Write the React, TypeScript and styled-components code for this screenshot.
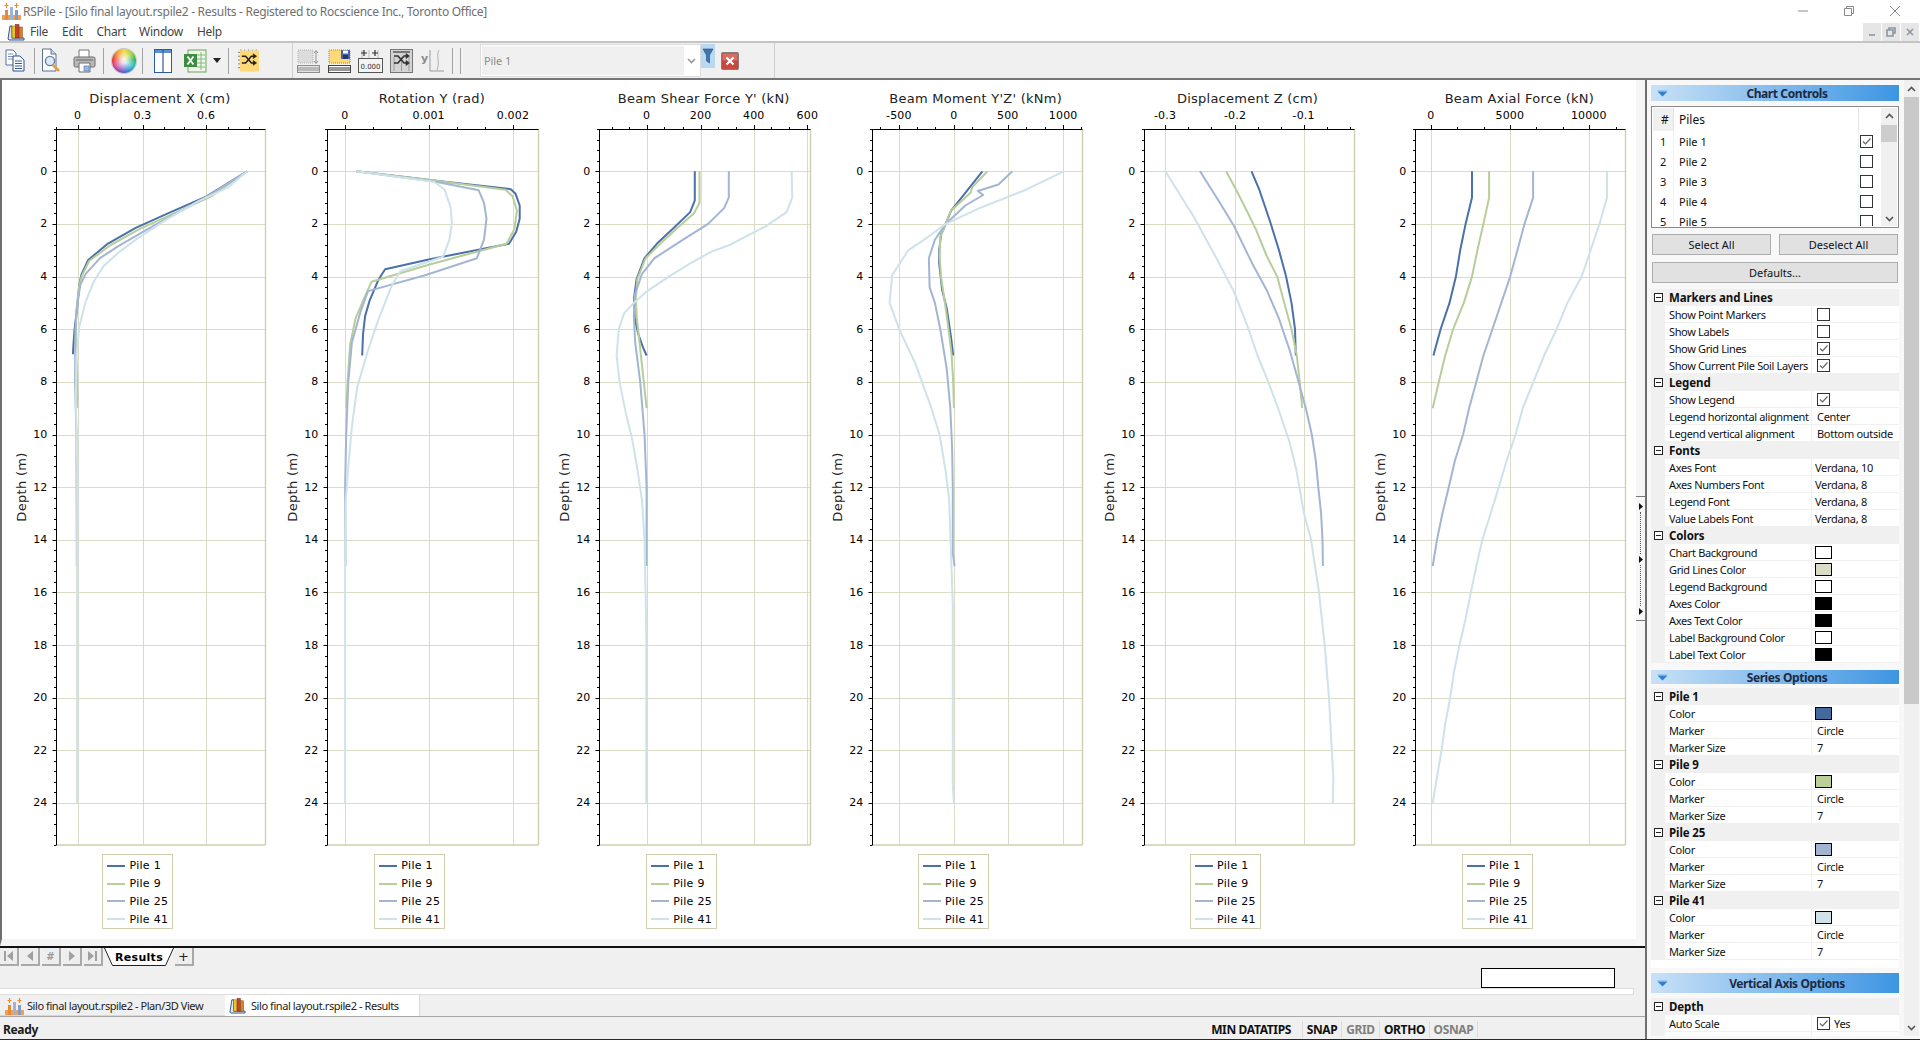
import React from 'react';
import styled, { createGlobalStyle } from 'styled-components';

const UI_FONT = '"Noto Sans", "Liberation Sans", sans-serif';
const CHART_FONT = '"DejaVu Sans", Verdana, sans-serif';

const GlobalStyle = createGlobalStyle`
	html, body {
		margin: 0;
		padding: 0;
		background: #fff;
		overflow: hidden;
	}
	* {
		box-sizing: border-box;
	}
`;

const Window = styled.div`
	width: 1920px;
	height: 1040px;
	display: flex;
	flex-direction: column;
	font-family: ${UI_FONT};
	font-size: 11px;
	color: #111;
	background: #fff;
	overflow: hidden;
	border-bottom: 1px solid #1c2a4a;
`;

/* ---------- title + menu ---------- */

const TitleBar = styled.div`
	height: 22px;
	flex: none;
	display: flex;
	align-items: center;
	padding-left: 2px;
	font-size: 12px;
	color: #6f6f6f;
`;

const TitleText = styled.span`
	margin-left: 2px;
	letter-spacing: -0.28px;
`;

const CaptionButtons = styled.div`
	margin-left: auto;
	display: flex;
	align-items: center;
	padding-right: 20px;
	gap: 36px;
`;

const MenuBar = styled.div`
	height: 19px;
	flex: none;
	display: flex;
	align-items: center;
	padding-left: 7px;
	color: #444;
`;

const MenuItem = styled.span<{ $ml: number }>`
	margin-left: ${(p) => p.$ml}px;
	font-size: 12px;
	letter-spacing: -0.28px;
`;

const MdiButtons = styled.div`
	margin-left: auto;
	display: flex;
	gap: 1px;
	padding-right: 1px;
`;

const MdiButton = styled.div`
	width: 18px;
	height: 18px;
	background: #e6e6e6;
	display: flex;
	align-items: center;
	justify-content: center;
`;

/* ---------- toolbar ---------- */

const Toolbar = styled.div`
	height: 39px;
	flex: none;
	display: flex;
	align-items: center;
	background: #f0f0f0;
	border-top: 2px solid #c4c4c4;
	border-bottom: 2px solid #767676;
`;

const IconSlot = styled.div<{ $ml: number; $w: number }>`
	flex: none;
	margin-left: ${(p) => p.$ml}px;
	width: ${(p) => p.$w}px;
	height: 25px;
	display: flex;
	align-items: center;
	justify-content: center;
`;

const ToolSep = styled.div<{ $ml: number; $tall?: boolean }>`
	flex: none;
	margin-left: ${(p) => p.$ml}px;
	width: 1px;
	height: ${(p) => (p.$tall ? 35 : 26)}px;
	background: ${(p) => (p.$tall ? '#cfcfcf' : '#a2a2a2')};
`;

const Wheel = styled.div`
	width: 24px;
	height: 24px;
	border-radius: 50%;
	background: radial-gradient(circle, rgba(255, 255, 255, 0.85) 0 12%, rgba(255, 255, 255, 0) 70%),
		conic-gradient(#f7d327, #a6d02c, #27b14c, #1cb7c6, #2f6fd0, #7a3fb8, #d82f8c, #e5332a, #f48a22, #f7d327);
	box-shadow: 0 0 0 1px rgba(120, 120, 120, 0.35);
`;

const Combo = styled.div`
	flex: none;
	margin-left: 19px;
	width: 221px;
	height: 33px;
	background: #fff;
	border: 1px solid #dcdcdc;
	padding: 1px;
	display: flex;
	align-items: center;
	color: #8d8d8d;
	font-size: 11px;
	letter-spacing: -0.1px;
`;

const ComboField = styled.div`
	width: 202px;
	height: 29px;
	background: #f0f0f0;
	padding-left: 2px;
	display: flex;
	align-items: center;
`;

const ComboChevron = styled.div`
	flex: 1;
	display: flex;
	justify-content: center;
`;

const FilterBtn = styled.div`
	flex: none;
	align-self: flex-start;
	margin-top: 1px;
	width: 14px;
	height: 24px;
	background: #b9d9f3;
	display: flex;
	align-items: center;
	justify-content: center;
`;

/* ---------- main area ---------- */

const Main = styled.div`
	flex: 1;
	min-height: 0;
	display: flex;
`;

const LeftColumn = styled.div`
	width: 1645px;
	flex: none;
	display: flex;
	flex-direction: column;
	background: #f0f0f0;
`;

const ChartFrame = styled.div`
	height: 866px;
	flex: none;
	display: flex;
	background: #f0f0f0;
`;

const ChartArea = styled.div`
	width: 1636px;
	flex: none;
	background: #fff;
	display: flex;
	border-left: 2px solid #6f6f6f;
	border-bottom: 7px solid #f4f4f4;
`;

const Splitter = styled.div`
	flex: 1;
	background: #f6f6f6;
	display: flex;
	flex-direction: column;
	align-items: stretch;
	padding-top: 416px;
`;

const SplitterGrip = styled.div`
	height: 125px;
	border-top: 1px solid #777;
	border-bottom: 1px solid #777;
	display: flex;
	flex-direction: column;
	justify-content: space-between;
	align-items: center;
	padding: 6px 0 5px;
`;

const SplitterDots = styled.div`
	flex: 1;
	width: 1px;
	margin: 2px 0;
	border-left: 1px dotted #555;
`;

const ChartCell = styled.div`
	width: 271.9px;
	flex: none;
	display: flex;
	flex-direction: column;
	align-items: center;
`;

const ChartTitle = styled.div`
	margin-top: 11px;
	height: 16px;
	line-height: 16px;
	font-family: ${CHART_FONT};
	font-size: 13px;
	letter-spacing: 0.25px;
	color: #222;
	white-space: nowrap;
	text-align: center;
	width: 100%;
	padding-left: 44px;
`;

const ChartSvg = styled.svg`
	display: block;
	flex: none;
	align-self: flex-start;
`;

const AxisNumber = styled.text`
	font-family: ${CHART_FONT};
	font-size: 11px;
	letter-spacing: 0.15px;
	fill: #000;
`;

const AxisLabel = styled.text`
	font-family: ${CHART_FONT};
	font-size: 13px;
	letter-spacing: 0.3px;
	fill: #222;
`;

const Legend = styled.div`
	margin-top: 7px;
	width: 71px;
	height: 75px;
	border: 1.5px solid #cfcfae;
	padding: 2px 0 0 4px;
	display: flex;
	flex-direction: column;
	font-family: ${CHART_FONT};
	font-size: 11px;
	letter-spacing: 0.3px;
	color: #000;
`;

const LegendRow = styled.div`
	height: 18px;
	display: flex;
	align-items: center;
	white-space: nowrap;
`;

const LegendLine = styled.div<{ $color: string }>`
	width: 18px;
	height: 2px;
	margin-right: 4px;
	background: ${(p) => p.$color};
`;

/* ---------- sheet tabs + bottom ---------- */

const SheetBar = styled.div`
	height: 42px;
	flex: none;
	border-top: 2px solid #111;
	display: flex;
	align-items: flex-start;
	position: relative;
`;

const SheetNav = styled.div`
	width: 19px;
	height: 18px;
	margin-right: 2px;
	background: #eeeeee;
	border-right: 2px solid #a9a9a9;
	border-bottom: 2px solid #a9a9a9;
	display: flex;
	align-items: center;
	justify-content: center;
	color: #9a9a9a;
	font-family: ${CHART_FONT};
	font-weight: 700;
	font-size: 10px;
`;

const SheetTab = styled.div`
	position: relative;
	width: 70px;
	height: 18px;
	margin-left: -1px;
	font-family: ${CHART_FONT};
	font-weight: 700;
	font-size: 11px;
	letter-spacing: 0.3px;
	display: flex;
	align-items: center;
	justify-content: center;
	color: #000;
`;

const SheetTabShape = styled.svg`
	position: absolute;
	left: 0;
	top: 0;
`;

const SheetTabLabel = styled.span`
	position: relative;
`;

const SheetAdd = styled(SheetNav)`
	margin-left: 1px;
	color: #222;
	font-size: 13px;
	font-weight: 400;
`;

const SearchBox = styled.div`
	position: absolute;
	left: 1481px;
	top: 20px;
	width: 134px;
	height: 20px;
	background: #fff;
	border: 1px solid #000;
`;

const ScrollStrip = styled.div`
	height: 7px;
	flex: none;
	width: 1634px;
	background: #fff;
	border: 1px solid #dedede;
	border-left: 0;
`;

const DocTabs = styled.div`
	height: 22px;
	flex: none;
	display: flex;
	align-items: flex-end;
	border-bottom: 1px solid #a8a8a8;
`;

const DocTab = styled.div<{ $active?: boolean; $w: number }>`
	width: ${(p) => p.$w}px;
	height: ${(p) => (p.$active ? 21 : 20)}px;
	background: ${(p) => (p.$active ? '#fff' : '#f0f0f0')};
	border-right: ${(p) => (p.$active ? '1px solid #d8d8d8' : '0')};
	border-bottom: ${(p) => (p.$active ? '0' : '1px solid #d8d8d8')};
	display: flex;
	align-items: center;
	gap: ${(p) => (p.$active ? 5 : 3)}px;
	padding-left: ${(p) => (p.$active ? 4 : 5)}px;
	font-size: 11px;
	letter-spacing: -0.43px;
	white-space: nowrap;
	color: #222;
`;

const StatusBar = styled.div`
	flex: 1;
	display: flex;
	align-items: center;
	padding: 2px 0 0 3px;
	font-weight: 700;
	font-size: 12px;
	letter-spacing: -0.35px;
	color: #1a1a1a;
`;

const StatusPanes = styled.div`
	margin-left: auto;
	display: flex;
	align-items: center;
	padding-right: 167px;
`;

const StatusPane = styled.div<{ $w: number; $off?: boolean; $pr?: number }>`
	width: ${(p) => p.$w}px;
	height: 17px;
	line-height: 17px;
	text-align: ${(p) => (p.$pr ? 'right' : 'center')};
	padding-right: ${(p) => p.$pr ?? 0}px;
	border-right: 1px solid #dcdcdc;
	color: ${(p) => (p.$off ? '#808080' : '#111')};
	white-space: nowrap;
`;

/* ---------- right panel ---------- */

const RightPanel = styled.div`
	flex: 1;
	display: flex;
	background: #f8f8f8;
	border-left: 2px solid #6f6f6f;
	min-width: 0;
`;

const PanelBody = styled.div`
	width: 257px;
	flex: none;
	padding: 5px 5px 0 4px;
	overflow: hidden;
	height: 956px;
`;

const SectionHeader = styled.div<{ $h: number; $mt: number }>`
	height: ${(p) => p.$h}px;
	margin-top: ${(p) => p.$mt}px;
	padding-left: 24px;
	background: linear-gradient(90deg, #c9e1f6 0%, #3d95e2 100%);
	display: flex;
	align-items: center;
	justify-content: center;
	position: relative;
	font-weight: 700;
	font-size: 12px;
	letter-spacing: -0.4px;
	color: #1c2a44;
`;

const HeaderArrow = styled.svg`
	position: absolute;
	left: 6px;
	top: 50%;
	margin-top: -4px;
`;

const PileList = styled.div`
	margin-top: 5px;
	height: 122px;
	border: 1px solid #8a8a8a;
	background: #fff;
	display: flex;
	padding: 1px;
	overflow: hidden;
`;

const PileListRows = styled.div`
	flex: 1;
	min-width: 0;
	overflow: hidden;
`;

const PileHeadRow = styled.div`
	height: 23px;
	display: flex;
	align-items: center;
	font-size: 12px;
`;

const PileRow = styled.div`
	height: 20px;
	display: flex;
	align-items: center;
`;

const PileNum = styled.div<{ $head?: boolean }>`
	width: 21px;
	flex: none;
	padding-left: ${(p) => (p.$head ? 8 : 7)}px;
	height: 100%;
	display: flex;
	align-items: center;
	background: ${(p) => (p.$head ? '#f0f0f0' : 'transparent')};
	border-right: 1px solid ${(p) => (p.$head ? '#e4e4e4' : '#eef3fa')};
`;

const PileName = styled.div`
	flex: 1;
	padding-left: 5px;
`;

const PileCheckCell = styled.div<{ $head?: boolean }>`
	width: 20px;
	flex: none;
	height: 100%;
	display: flex;
	align-items: center;
	padding-left: 1px;
	border-left: 1px solid ${(p) => (p.$head ? '#e4e4e4' : '#eef3fa')};
`;

const MiniScroll = styled.div`
	width: 16px;
	flex: none;
	background: #f0f0f0;
	display: flex;
	flex-direction: column;
	align-items: center;
	justify-content: space-between;
	position: relative;
	padding: 5px 0 4px;
	margin-left: 3px;
`;

const MiniThumb = styled.div`
	position: absolute;
	left: 0;
	right: 0;
	top: 17px;
	height: 17px;
	background: #cdcdcd;
`;

const ButtonRow = styled.div<{ $mt: number }>`
	margin-top: ${(p) => p.$mt}px;
	display: flex;
	justify-content: space-between;
	padding: 0 1px;
`;

const PanelButton = styled.div<{ $w?: number }>`
	width: ${(p) => (p.$w ? `${p.$w}px` : '100%')};
	height: 21px;
	background: #e1e1e1;
	border: 1px solid #adadad;
	display: flex;
	align-items: center;
	justify-content: center;
	font-size: 11px;
	color: #111;
`;

const PropGrid = styled.div<{ $mt: number }>`
	margin-top: ${(p) => p.$mt}px;
	background: #f0f0f0;
`;

const Category = styled.div`
	height: 17px;
	display: flex;
	align-items: center;
	padding-left: 3px;
	font-weight: 700;
	font-size: 11.5px;
	letter-spacing: -0.1px;
	background: #f0f0f0;
`;

const MinusBox = styled.div`
	width: 9px;
	height: 9px;
	margin-right: 6px;
	border: 1px solid #222;
	position: relative;
	background: #fff;

	&::after {
		content: '';
		position: absolute;
		left: 1px;
		right: 1px;
		top: 3px;
		height: 1px;
		background: #222;
	}
`;

const PropRow = styled.div`
	height: 17px;
	margin-left: 14px;
	display: flex;
	align-items: stretch;
	background: #fff;
	border-bottom: 1px solid #f0f0f0;
`;

const PropName = styled.div`
	width: 147px;
	flex: none;
	padding-left: 4px;
	display: flex;
	align-items: center;
	border-right: 1px solid #f0f0f0;
	white-space: nowrap;
	font-size: 11px;
	letter-spacing: -0.36px;
`;

const PropValue = styled.div<{ $pl?: number }>`
	flex: 1;
	padding-left: ${(p) => p.$pl ?? 4}px;
	display: flex;
	align-items: center;
	gap: 4px;
	white-space: nowrap;
	font-size: 11px;
	letter-spacing: -0.3px;
`;

const Check = styled.div`
	width: 13px;
	height: 13px;
	flex: none;
	background: #fff;
	border: 1px solid #333;
	display: flex;
	align-items: center;
	justify-content: center;
`;

const Swatch = styled.div<{ $color: string }>`
	width: 17px;
	height: 13px;
	background: ${(p) => p.$color};
	border: 1px solid #000;
	margin-left: -1px;
`;

const WhiteGap = styled.div`
	height: 8px;
	background: #fff;
`;

const PanelScroll = styled.div`
	flex: 1;
	margin-right: 1px;
	background: #f0f0f0;
	display: flex;
	flex-direction: column;
	height: 956px;
`;

const ScrollArrow = styled.div`
	height: 17px;
	flex: none;
	display: flex;
	align-items: center;
	justify-content: center;
`;

const ScrollThumb = styled.div`
	height: 607px;
	flex: none;
	background: #c9c9c9;
`;

const ScrollRest = styled.div`
	flex: 1;
`;

/* ---------- icons ---------- */

const Chevron = ({ up, color = '#555' }: { up?: boolean; color?: string }) => (
	<svg width="9" height="6" viewBox="0 0 9 6">
		<path d={up ? 'M1 5 L4.5 1.5 L8 5' : 'M1 1 L4.5 4.5 L8 1'} fill="none" stroke={color} strokeWidth="1.6" />
	</svg>
);

const CheckMark = ({ color = '#666' }: { color?: string }) => (
	<svg width="11" height="11" viewBox="0 0 11 11">
		<path d="M2 5.5 L4.5 8 L9.5 2.5" fill="none" stroke={color} strokeWidth="1.2" />
	</svg>
);

const AppLogo = () => (
	<svg width="19" height="20" viewBox="0 0 19 20">
		<rect x="0" y="14" width="19" height="5" fill="#f0a050" />
		<rect x="3" y="9" width="3" height="10" fill="#e58a3a" />
		<rect x="8" y="6" width="3" height="13" fill="#9db4d8" />
		<rect x="13" y="9" width="3" height="10" fill="#7d9cc9" />
		<path d="M4.5 2 V7 M2.5 4.5 H6.5" stroke="#ef8a2c" strokeWidth="1.2" />
		<path d="M14.5 2 V7 M12.5 4.5 H16.5" stroke="#ef8a2c" strokeWidth="1.2" />
	</svg>
);

const BooksLogo = ({ size = 18 }: { size?: number }) => (
	<svg width={size} height={size} viewBox="0 0 18 18">
		<path d="M1 16 L3 3 H5 V15 H17 V17 H2 Z" fill="#dfe6f2" stroke="#33538c" strokeWidth="1" />
		<rect x="5" y="3" width="3.4" height="12" fill="#e7c62d" stroke="#7a5f10" strokeWidth="0.5" />
		<rect x="8.6" y="1.5" width="3.4" height="13.5" fill="#c9402c" stroke="#6f1f13" strokeWidth="0.5" />
		<rect x="12.2" y="4" width="3.2" height="11" fill="#d9802a" stroke="#7a4510" strokeWidth="0.5" />
	</svg>
);

const CopyIcon = () => (
	<svg width="20" height="23" viewBox="0 0 20 23">
		<path d="M1 1 H8 L11 4 V16 H1 Z" fill="#fff" stroke="#5273a8" />
		<path d="M3 5 H8 M3 7.5 H8 M3 10 H8" stroke="#7a93bd" />
		<path d="M8 7 H15 L19 11 V22 H8 Z" fill="#fff" stroke="#2d4f90" />
		<path d="M10 12 H17 M10 14.5 H17 M10 17 H17 M10 19.5 H17" stroke="#355ba0" />
	</svg>
);

const PreviewIcon = () => (
	<svg width="23" height="25" viewBox="0 0 23 25">
		<path d="M1.5 1 H10 L15 6 V23 H1.5 Z" fill="#fff" stroke="#5b6f92" />
		<path d="M10 1 V6 H15" fill="#cfd9ea" stroke="#5b6f92" />
		<circle cx="9" cy="13" r="4.6" fill="#dceaf6" stroke="#6a7d98" strokeWidth="1.4" />
		<path d="M12 17 L18 23" stroke="#e0a33b" strokeWidth="2.6" />
	</svg>
);

const PrinterIcon = () => (
	<svg width="23" height="24" viewBox="0 0 23 24">
		<path d="M6 1 H16 V9 H6 Z" fill="#fff" stroke="#777" />
		<rect x="1" y="8" width="21" height="10" rx="1.5" fill="#b9b9b9" stroke="#6d6d6d" />
		<rect x="3" y="10" width="17" height="2" fill="#8e8e8e" />
		<path d="M6 14 H17 V23 H6 Z" fill="#fff" stroke="#6d6d6d" />
		<rect x="11" y="17" width="5" height="5" fill="#9db8e0" stroke="#4d6fa8" strokeWidth="0.6" />
	</svg>
);

const ColumnsIcon = () => (
	<svg width="18" height="24" viewBox="0 0 18 24">
		<rect x="0.5" y="0.5" width="17" height="23" fill="#fff" stroke="#2f5a9e" />
		<rect x="1" y="1" width="16" height="3" fill="#5a8ed2" />
		<path d="M9 1 V23" stroke="#2f5a9e" strokeWidth="1.2" />
	</svg>
);

const ExcelIcon = () => (
	<svg width="24" height="24" viewBox="0 0 24 24">
		<rect x="5" y="1" width="18" height="22" fill="#eef5ea" stroke="#6aa261" />
		<path d="M14 6 H22 M14 10 H22 M14 14 H22 M14 18 H22 M18 3 V21" stroke="#86b97d" />
		<rect x="1" y="5" width="13" height="13" fill="#3e8e41" />
		<path d="M4.5 7.5 L10.5 15.5 M10.5 7.5 L4.5 15.5" stroke="#fff" strokeWidth="1.8" />
	</svg>
);

const ShuffleArrows = ({ color = '#222' }: { color?: string }) => (
	<g fill="none" stroke={color} strokeWidth="1.6">
		<path d="M4 7 H8 L14 14 H18" />
		<path d="M4 14 H8 L14 7 H18" />
		<path d="M16 4.5 L19.5 7 L16 9.5 Z M16 11.5 L19.5 14 L16 16.5 Z" fill={color} strokeWidth="0.6" />
	</g>
);

const NoteIcon = () => (
	<svg width="22" height="24" viewBox="0 0 22 24">
		<rect x="2" y="1" width="20" height="22" fill="#ffd877" />
		<path d="M0 3 H2 M0 7 H2 M0 11 H2 M0 15 H2 M0 19 H2 M3 0 V1 M7 0 V1 M11 0 V1 M15 0 V1 M19 0 V1" stroke="#777" />
		<ShuffleArrows />
	</svg>
);

const AutoScaleIcon = () => (
	<svg width="23" height="24" viewBox="0 0 23 24">
		<rect x="1" y="1" width="15" height="13" fill="#dcdcdc" stroke="#b0b0b0" strokeDasharray="1 1" />
		<path d="M19 2 V14 M17 4 L19 1.5 L21 4 M17 12 L19 14.5 L21 12" fill="none" stroke="#8f8f8f" />
		<rect x="0.5" y="16.5" width="22" height="7" fill="#e4e4e4" stroke="#8f8f8f" />
		<path d="M1 19 H22 M1 21 H22" stroke="#8f8f8f" />
	</svg>
);

const SaveGridIcon = () => (
	<svg width="23" height="24" viewBox="0 0 23 24">
		<rect x="1" y="1" width="21" height="13" fill="#ffd877" stroke="#888" strokeDasharray="1 1" />
		<rect x="13" y="1" width="9" height="9" fill="#4a64a8" />
		<rect x="15" y="1.5" width="5" height="3" fill="#fff" />
		<rect x="15" y="6" width="5" height="4" fill="#26366e" />
		<rect x="0.5" y="16.5" width="22" height="7" fill="#fff" stroke="#444" />
		<path d="M1 19 H22 M1 21 H22" stroke="#333" />
	</svg>
);

const ValuesIcon = () => (
	<svg width="25" height="25" viewBox="0 0 25 25">
		<path d="M4 2 V14 M11 2 V14 M20 2 V14 M1 14.5 H24" stroke="#bbb" />
		<path d="M3 5 H9 M6 2 V8 M14 5 H20 M17 2 V8" stroke="#333" strokeWidth="1.2" />
		<rect x="0.5" y="10.5" width="24" height="14" fill="#f4f4f4" stroke="#555" />
		<text x="12.5" y="21" textAnchor="middle" fontFamily={CHART_FONT} fontSize="7" fill="#333">0.000</text>
	</svg>
);

const GreyShuffleIcon = () => (
	<svg width="23" height="24" viewBox="0 0 23 24">
		<rect x="0.5" y="0.5" width="22" height="23" fill="#d4d4d4" stroke="#777" />
		<path d="M3 3 H20" stroke="#777" strokeWidth="2" />
		<path d="M4 8 V22 M11.5 8 V22 M19 8 V22" stroke="#9a9a9a" />
		<ShuffleArrows color="#333" />
	</svg>
);

const CurveIcon = () => (
	<svg width="25" height="24" viewBox="0 0 25 24">
		<text x="1" y="13" fontFamily={CHART_FONT} fontWeight="700" fontSize="11" fill="#8c8c8c">y</text>
		<path d="M10 1 V22 H24" fill="none" stroke="#9a9a9a" />
		<path d="M19 1 C15 7 21 12 17 21" fill="none" stroke="#bdbdbd" strokeWidth="1.2" />
	</svg>
);

const FunnelIcon = () => (
	<svg width="12" height="20" viewBox="0 0 12 20">
		<path d="M1 3 H11 L7.5 9 V17 L4.5 15 V9 Z" fill="#3f77b2" stroke="#26486f" strokeWidth="0.6" />
	</svg>
);

const CloseRedIcon = () => (
	<svg width="18" height="18" viewBox="0 0 18 18">
		<rect x="0.5" y="0.5" width="17" height="17" rx="1" fill="#c8473e" stroke="#8e7a78" />
		<rect x="1.5" y="1.5" width="15" height="7" fill="#dc7d72" opacity="0.7" />
		<path d="M5.5 5.5 L12.5 12.5 M12.5 5.5 L5.5 12.5" stroke="#fff" strokeWidth="2.2" />
	</svg>
);

const DownTriangle = () => (
	<svg width="8" height="5" viewBox="0 0 8 5">
		<path d="M0 0 H8 L4 5 Z" fill="#222" />
	</svg>
);

const HeadTriangle = () => (
	<HeaderArrow width="11" height="8" viewBox="0 0 11 8">
		<path d="M0.5 1.5 H10.5" stroke="#9cc8ee" />
		<path d="M0.5 2.5 H10.5 L5.5 7.5 Z" fill="#2f80cf" />
	</HeaderArrow>
);

const GripArrow = () => (
	<svg width="4" height="7" viewBox="0 0 4 7">
		<path d="M0 0 L4 3.5 L0 7 Z" fill="#111" />
	</svg>
);

const NavGlyph = ({ d }: { d: string }) => (
	<svg width="11" height="12" viewBox="0 0 11 12">
		<path d={d} fill="#a0a0a0" />
	</svg>
);

const CaptionMin = () => (
	<svg width="10" height="2" viewBox="0 0 10 2">
		<path d="M0 1 H10" stroke="#8a8a8a" />
	</svg>
);
const CaptionMax = () => (
	<svg width="10" height="10" viewBox="0 0 10 10">
		<path d="M2.5 2.5 V0.5 H9.5 V7.5 H7.5 M0.5 2.5 H7.5 V9.5 H0.5 Z" fill="none" stroke="#8a8a8a" />
	</svg>
);
const CaptionClose = () => (
	<svg width="10" height="10" viewBox="0 0 10 10">
		<path d="M0 0 L10 10 M10 0 L0 10" stroke="#8a8a8a" />
	</svg>
);

const MdiGlyph = ({ d }: { d: string }) => (
	<svg width="10" height="10" viewBox="0 0 10 10">
		<path d={d} fill="none" stroke="#8a96a5" strokeWidth="1.6" />
	</svg>
);

/* ---------- chart data: [x in zoom px, depth] ---------- */

type Pt = [number, number];

const PILE_COLORS = ['#4a71a8', '#b7cd9a', '#a2b5d3', '#cee2ea'];
const PILE_NAMES = ['Pile 1', 'Pile 9', 'Pile 25', 'Pile 41'];

interface ChartDef {
	title: string;
	origin: number;
	left: number;
	right: number;
	majors: [number, string][];
	minors: number[];
	curves: Pt[][];
}

const CHARTS: ChartDef[] = [
	{
		title: 'Displacement X (cm)',
		origin: 0,
		left: 156,
		right: 743,
		majors: [[217, '0'], [399, '0.3'], [577, '0.6']],
		minors: [158, 278, 338, 458, 516, 638, 698],
		curves: [
			[[692, 0], [577, 0.96], [470, 1.6], [380, 2.15], [300, 2.77], [247, 3.37], [228, 3.93], [222, 4.3], [215, 5.3], [209, 6], [206, 6.5], [204, 6.95]],
			[[692, 0], [590, 0.96], [480, 1.65], [390, 2.2], [310, 2.8], [250, 3.4], [230, 3.95], [222, 4.3], [214, 5.3], [212, 6.3], [215, 7.5], [217, 8.6], [216, 9]],
			[[692, 0], [577, 0.98], [480, 1.7], [400, 2.3], [330, 2.85], [280, 3.3], [240, 3.9], [225, 4.3], [215, 5.2], [211, 6], [210, 8], [214, 10], [215, 15]],
			[[692, 0], [640, 0.6], [560, 1.1], [470, 1.8], [385, 2.55], [335, 3.05], [290, 3.6], [262, 4.2], [240, 4.95], [222, 5.9], [214, 7], [212, 8.5], [216, 11], [216, 24]],
		],
	},
	{
		title: 'Rotation Y (rad)',
		origin: 0,
		left: 916,
		right: 1505,
		majors: [[965, '0'], [1200, '0.001'], [1436, '0.002']],
		minors: [1043, 1122, 1278, 1357],
		curves: [
			[[998, 0], [1215, 0.35], [1430, 0.68], [1443, 0.85], [1455, 1.3], [1455, 1.8], [1445, 2.3], [1425, 2.75], [1200, 3.35], [1078, 3.72], [1060, 4.1], [1035, 4.9], [1022, 5.5], [1016, 6.2], [1014, 7]],
			[[998, 0], [1215, 0.35], [1415, 0.7], [1435, 0.95], [1447, 1.5], [1440, 2.2], [1418, 2.75], [1200, 3.55], [1040, 4.2], [1020, 4.8], [995, 5.6], [980, 6.6], [973, 8], [970, 9]],
			[[998, 0], [1220, 0.4], [1340, 0.72], [1355, 1.2], [1362, 1.8], [1355, 2.6], [1335, 3.3], [1190, 3.95], [1030, 4.55], [1010, 5.3], [985, 6.5], [975, 8], [969, 10], [966, 12], [967, 15]],
			[[998, 0], [1215, 0.4], [1245, 0.7], [1262, 1.4], [1265, 2], [1258, 2.6], [1240, 3.25], [1120, 3.8], [1095, 4.4], [1060, 5.6], [1030, 6.8], [1000, 8.2], [985, 9.7], [975, 11.2], [968, 12.5], [966, 15], [966, 24]],
		],
	},
	{
		title: "Beam Shear Force Y' (kN)",
		origin: 540,
		left: 166,
		right: 755,
		majors: [[298, '0'], [449, '200'], [598, '400'], [748, '600']],
		minors: [200, 250, 348, 399, 498, 548, 646, 698],
		curves: [
			[[433, 0], [433, 1.1], [420, 1.55], [370, 2.2], [330, 2.7], [292, 3.3], [270, 4.1], [263, 4.8], [265, 5.6], [275, 6.2], [288, 6.7], [298, 7]],
			[[446, 0], [446, 1.2], [430, 1.6], [380, 2.2], [340, 2.7], [295, 3.3], [272, 4.1], [268, 4.8], [270, 5.5], [278, 6.5], [290, 8], [298, 9]],
			[[528, 0], [528, 1], [515, 1.4], [470, 2], [400, 2.6], [320, 3.3], [285, 3.9], [265, 4.7], [262, 5.5], [266, 6.5], [280, 8], [292, 10], [298, 12], [298, 15]],
			[[704, 0], [706, 1], [690, 1.55], [630, 2.1], [530, 2.8], [480, 3.05], [420, 3.5], [360, 4], [300, 4.55], [262, 5], [235, 5.4], [220, 6], [214, 7], [222, 8], [240, 9.2], [258, 10.2], [272, 11.3], [285, 12.5], [292, 14], [295, 16], [297, 17.5], [297, 24]],
		],
	},
	{
		title: "Beam Moment Y'Z' (kNm)",
		origin: 540,
		left: 928,
		right: 1516,
		majors: [[1004, '-500'], [1158, '0'], [1309, '500'], [1464, '1000']],
		minors: [950, 1055, 1106, 1209, 1260, 1361, 1412, 1514],
		curves: [
			[[1238, 0], [1200, 0.65], [1150, 1.5], [1135, 2], [1122, 2.4], [1117, 3], [1117, 3.5], [1125, 4.5], [1138, 5.2], [1150, 6.3], [1156, 7]],
			[[1252, 0], [1210, 0.6], [1205, 0.8], [1150, 1.5], [1135, 2], [1120, 2.5], [1118, 3.2], [1122, 4], [1135, 5.2], [1145, 6.2], [1152, 7], [1156, 8], [1158, 9]],
			[[1322, 0], [1283, 0.5], [1225, 0.75], [1240, 0.9], [1190, 1.3], [1135, 2], [1105, 2.6], [1088, 3.3], [1090, 4.4], [1105, 5], [1120, 6], [1138, 7.5], [1148, 9], [1153, 10.5], [1155, 12], [1155, 14.5], [1160, 15]],
			[[1466, 0], [1360, 0.7], [1230, 1.4], [1135, 2], [1075, 2.6], [1030, 3], [985, 3.95], [978, 5], [1005, 6], [1050, 7.3], [1095, 9], [1118, 10], [1135, 11.4], [1145, 12.5], [1150, 14.5], [1155, 16.5], [1155, 23.3], [1158, 24]],
		],
	},
	{
		title: 'Displacement Z (cm)',
		origin: 1100,
		left: 121,
		right: 709,
		majors: [[181, '-0.3'], [377, '-0.2'], [569, '-0.1']],
		minors: [245, 310, 440, 505, 634, 698],
		curves: [
			[[423, 0], [445, 0.7], [475, 1.9], [500, 3], [520, 4], [535, 5], [545, 6], [547, 7]],
			[[352, 0], [380, 0.7], [410, 1.5], [435, 2.2], [465, 3.2], [495, 4], [515, 5], [535, 6], [550, 7], [558, 8], [565, 9]],
			[[279, 0], [330, 1.1], [375, 2.1], [425, 3.5], [465, 4.5], [500, 5.6], [530, 6.8], [555, 8], [575, 9], [592, 10], [603, 11], [610, 12], [618, 13], [622, 14], [623, 15]],
			[[182, 0], [260, 1.7], [325, 3.3], [375, 4.6], [415, 6], [440, 7], [470, 8], [500, 9.1], [530, 10.3], [548, 11.3], [570, 13], [590, 14], [612, 16], [628, 18], [640, 20], [648, 22], [652, 23], [651, 24]],
		],
	},
	{
		title: 'Beam Axial Force (kN)',
		origin: 1100,
		left: 883,
		right: 1472,
		majors: [[928, '0'], [1149, '5000'], [1370, '10000']],
		minors: [1002, 1076, 1223, 1297, 1447],
		curves: [
			[[1043, 0], [1043, 1], [1025, 2], [1010, 3], [998, 4], [980, 5], [955, 6], [935, 7]],
			[[1091, 0], [1091, 1], [1075, 2], [1058, 3], [1043, 4], [1020, 5], [990, 6], [968, 7], [950, 8], [933, 9]],
			[[1214, 0], [1214, 1], [1190, 2], [1170, 3], [1150, 4], [1125, 5], [1100, 6], [1075, 7], [1055, 8], [1035, 9], [1018, 10], [995, 11], [978, 12], [960, 13], [945, 14], [933, 15]],
			[[1421, 0], [1421, 1], [1400, 2], [1375, 3], [1350, 4], [1310, 5], [1280, 6], [1245, 7], [1215, 8], [1185, 9], [1165, 10], [1140, 11], [1118, 12], [1095, 13], [1072, 14], [1055, 15], [1040, 16], [1025, 17], [1008, 18], [993, 19], [982, 20], [968, 21], [958, 22], [945, 23], [933, 24]],
		],
	},
];

const CELL_W = 271.9;
const Y_ZERO = 64.3;
const Y_UNIT = 26.32;
const TOP = 22;
const BOTTOM = 738;

const yOf = (d: number) => Y_ZERO + d * Y_UNIT;
const crisp = (v: number) => Math.round(v) + 0.5;

const DepthChart = ({ def, index }: { def: ChartDef; index: number }) => {
	const cellStart = 2 + index * CELL_W;
	const xOf = (z: number) => z / 2.8 + def.origin - cellStart;
	const l = crisp(xOf(def.left));
	const r = crisp(xOf(def.right));
	const yMinor: number[] = [];
	for (let i = -4; i <= 64; i++) yMinor.push(i * 0.4);
	const yMajor: number[] = [];
	for (let d = 0; d <= 24; d += 2) yMajor.push(d);

	return (
		<ChartSvg width="272" height="740" viewBox="0 0 272 740">
			{def.majors.map(([z]) => (
				<line key={z} x1={crisp(xOf(z))} x2={crisp(xOf(z))} y1={TOP} y2={BOTTOM} stroke="#dbdcc6" />
			))}
			{yMajor.map((d) => (
				<line key={d} x1={l} x2={r} y1={crisp(yOf(d))} y2={crisp(yOf(d))} stroke="#dbdcc6" />
			))}
			<line x1={r} x2={r} y1={TOP} y2={BOTTOM} stroke="#cfcfae" strokeWidth="1.4" />
			<line x1={l} x2={r} y1={BOTTOM} y2={BOTTOM} stroke="#cfcfae" strokeWidth="1.4" />

			{def.curves.map((pts, i) => (
				<polyline
					key={i}
					points={pts.map(([z, d]) => `${xOf(z).toFixed(1)},${yOf(d).toFixed(1)}`).join(' ')}
					fill="none"
					stroke={PILE_COLORS[i]}
					strokeWidth="2"
					strokeLinejoin="round"
				/>
			))}

			<line x1={l} x2={l} y1={TOP} y2={BOTTOM} stroke="#000" />
			<line x1={l} x2={r} y1={crisp(TOP)} y2={crisp(TOP)} stroke="#000" />
			{yMinor.map((d) => (
				<line key={d} x1={l - 2.5} x2={l} y1={crisp(yOf(d))} y2={crisp(yOf(d))} stroke="#000" />
			))}
			{yMajor.map((d) => (
				<g key={d}>
					<line x1={l - 4} x2={l} y1={crisp(yOf(d))} y2={crisp(yOf(d))} stroke="#000" />
					<AxisNumber x={l - 9} y={yOf(d) + 3.5} textAnchor="end">{d}</AxisNumber>
				</g>
			))}
			{def.minors.map((z) => (
				<line key={z} x1={crisp(xOf(z))} x2={crisp(xOf(z))} y1={TOP - 2} y2={TOP} stroke="#000" />
			))}
			{def.majors.map(([z, label]) => (
				<g key={z}>
					<line x1={crisp(xOf(z))} x2={crisp(xOf(z))} y1={TOP - 4} y2={TOP} stroke="#000" />
					<AxisNumber x={xOf(z)} y={12} textAnchor="middle">{label}</AxisNumber>
				</g>
			))}
			<AxisLabel transform={`translate(${l - 31} 380) rotate(-90)`} textAnchor="middle">Depth (m)</AxisLabel>
		</ChartSvg>
	);
};

/* ---------- panel data ---------- */

type PropItem =
	| { name: string; check: boolean; label?: string }
	| { name: string; value: string }
	| { name: string; color: string };

const renderProp = (p: PropItem) => (
	<PropRow key={p.name}>
		<PropName>{p.name}</PropName>
		{'check' in p && (
			<PropValue $pl={5}>
				<Check>{p.check && <CheckMark />}</Check>
				{p.label}
			</PropValue>
		)}
		{'value' in p && <PropValue $pl={p.value.startsWith('Verdana') ? 3 : 5}>{p.value}</PropValue>}
		{'color' in p && (
			<PropValue $pl={4}>
				<Swatch $color={p.color} />
			</PropValue>
		)}
	</PropRow>
);

const Group = ({ title, items }: { title: string; items: PropItem[] }) => (
	<>
		<Category>
			<MinusBox />
			{title}
		</Category>
		{items.map(renderProp)}
	</>
);

const CHART_GROUPS: { title: string; items: PropItem[] }[] = [
	{
		title: 'Markers and Lines',
		items: [
			{ name: 'Show Point Markers', check: false },
			{ name: 'Show Labels', check: false },
			{ name: 'Show Grid Lines', check: true },
			{ name: 'Show Current Pile Soil Layers', check: true },
		],
	},
	{
		title: 'Legend',
		items: [
			{ name: 'Show Legend', check: true },
			{ name: 'Legend horizontal alignment', value: 'Center' },
			{ name: 'Legend vertical alignment', value: 'Bottom outside' },
		],
	},
	{
		title: 'Fonts',
		items: [
			{ name: 'Axes Font', value: 'Verdana, 10' },
			{ name: 'Axes Numbers Font', value: 'Verdana, 8' },
			{ name: 'Legend Font', value: 'Verdana, 8' },
			{ name: 'Value Labels Font', value: 'Verdana, 8' },
		],
	},
	{
		title: 'Colors',
		items: [
			{ name: 'Chart Background', color: '#fff' },
			{ name: 'Grid Lines Color', color: '#dbdcc6' },
			{ name: 'Legend Background', color: '#fff' },
			{ name: 'Axes Color', color: '#000' },
			{ name: 'Axes Text Color', color: '#000' },
			{ name: 'Label Background Color', color: '#fff' },
			{ name: 'Label Text Color', color: '#000' },
		],
	},
];

const SERIES_GROUPS = [
	{ title: 'Pile 1', color: '#44699d' },
	{ title: 'Pile 9', color: '#bccf98' },
	{ title: 'Pile 25', color: '#a1b4d1' },
	{ title: 'Pile 41', color: '#d0e2e8' },
];

const App = () => {
	return (
		<Window>
			<GlobalStyle />
			<TitleBar>
				<AppLogo />
				<TitleText>RSPile - [Silo final layout.rspile2 - Results - Registered to Rocscience Inc., Toronto Office]</TitleText>
				<CaptionButtons>
					<CaptionMin />
					<CaptionMax />
					<CaptionClose />
				</CaptionButtons>
			</TitleBar>
			<MenuBar>
				<BooksLogo />
				<MenuItem $ml={5}>File</MenuItem>
				<MenuItem $ml={14}>Edit</MenuItem>
				<MenuItem $ml={14}>Chart</MenuItem>
				<MenuItem $ml={13}>Window</MenuItem>
				<MenuItem $ml={14}>Help</MenuItem>
				<MdiButtons>
					<MdiButton><MdiGlyph d="M2 8 H8" /></MdiButton>
					<MdiButton><MdiGlyph d="M3 3 V1 H9 V6 H7 M1 3 H7 V9 H1 Z" /></MdiButton>
					<MdiButton><MdiGlyph d="M2 2 L8 8 M8 2 L2 8" /></MdiButton>
				</MdiButtons>
			</MenuBar>
			<Toolbar>
				<IconSlot $ml={5} $w={20}><CopyIcon /></IconSlot>
				<ToolSep $ml={9} />
				<IconSlot $ml={6} $w={23}><PreviewIcon /></IconSlot>
				<IconSlot $ml={9} $w={23}><PrinterIcon /></IconSlot>
				<ToolSep $ml={7} />
				<IconSlot $ml={8} $w={24}><Wheel /></IconSlot>
				<ToolSep $ml={6} />
				<IconSlot $ml={11} $w={18}><ColumnsIcon /></IconSlot>
				<IconSlot $ml={11} $w={24}><ExcelIcon /></IconSlot>
				<IconSlot $ml={6} $w={8}><DownTriangle /></IconSlot>
				<ToolSep $ml={7} />
				<IconSlot $ml={9} $w={21}><NoteIcon /></IconSlot>
				<ToolSep $ml={33} $tall />
				<IconSlot $ml={4} $w={23}><AutoScaleIcon /></IconSlot>
				<IconSlot $ml={8} $w={23}><SaveGridIcon /></IconSlot>
				<IconSlot $ml={7} $w={25}><ValuesIcon /></IconSlot>
				<IconSlot $ml={7} $w={23}><GreyShuffleIcon /></IconSlot>
				<IconSlot $ml={7} $w={25}><CurveIcon /></IconSlot>
				<ToolSep $ml={7} />
				<ToolSep $ml={7} />
				<Combo>
					<ComboField>Pile 1</ComboField>
					<ComboChevron><Chevron color="#999" /></ComboChevron>
				</Combo>
				<FilterBtn><FunnelIcon /></FilterBtn>
				<IconSlot $ml={6} $w={18}><CloseRedIcon /></IconSlot>
				<ToolSep $ml={35} $tall />
			</Toolbar>
			<Main>
				<LeftColumn>
					<ChartFrame>
						<ChartArea>
							{CHARTS.map((def, i) => (
								<ChartCell key={def.title}>
									<ChartTitle>{def.title}</ChartTitle>
									<DepthChart def={def} index={i} />
									<Legend>
										{PILE_NAMES.map((name, j) => (
											<LegendRow key={name}>
												<LegendLine $color={PILE_COLORS[j]} />
												{name}
											</LegendRow>
										))}
									</Legend>
								</ChartCell>
							))}
						</ChartArea>
						<Splitter>
							<SplitterGrip>
								<GripArrow />
								<SplitterDots />
								<GripArrow />
								<SplitterDots />
								<GripArrow />
							</SplitterGrip>
						</Splitter>
					</ChartFrame>
					<SheetBar>
						<SheetNav><NavGlyph d="M1 1 H3 V11 H1 Z M10 1 V11 L4 6 Z" /></SheetNav>
						<SheetNav><NavGlyph d="M9 1 V11 L3 6 Z" /></SheetNav>
						<SheetNav>#</SheetNav>
						<SheetNav><NavGlyph d="M3 1 V11 L9 6 Z" /></SheetNav>
						<SheetNav><NavGlyph d="M1 1 V11 L7 6 Z M8 1 H10 V11 H8 Z" /></SheetNav>
						<SheetTab>
							<SheetTabShape width="70" height="18" viewBox="0 0 70 18">
								<path d="M0.5 0 L8.5 17.5 H61.5 L69.5 0" fill="#fff" stroke="#222" />
							</SheetTabShape>
							<SheetTabLabel>Results</SheetTabLabel>
						</SheetTab>
						<SheetAdd>+</SheetAdd>
						<SearchBox />
					</SheetBar>
					<ScrollStrip />
					<DocTabs>
						<DocTab $w={225}>
							<AppLogo />
							Silo final layout.rspile2 - Plan/3D View
						</DocTab>
						<DocTab $w={195} $active>
							<BooksLogo size={17} />
							Silo final layout.rspile2 - Results
						</DocTab>
					</DocTabs>
					<StatusBar>
						Ready
						<StatusPanes>
							<StatusPane $w={100} $pr={11}>MIN DATATIPS</StatusPane>
							<StatusPane $w={39}>SNAP</StatusPane>
							<StatusPane $w={38} $off>GRID</StatusPane>
							<StatusPane $w={50}>ORTHO</StatusPane>
							<StatusPane $w={48} $off>OSNAP</StatusPane>
						</StatusPanes>
					</StatusBar>
				</LeftColumn>
				<RightPanel>
					<PanelBody>
						<SectionHeader $h={16} $mt={0}>
							<HeadTriangle />
							Chart Controls
						</SectionHeader>
						<PileList>
							<PileListRows>
								<PileHeadRow>
									<PileNum $head>#</PileNum>
									<PileName>Piles</PileName>
									<PileCheckCell $head />
								</PileHeadRow>
								{[1, 2, 3, 4, 5].map((n) => (
									<PileRow key={n}>
										<PileNum>{n}</PileNum>
										<PileName>Pile {n}</PileName>
										<PileCheckCell>
											<Check>{n === 1 && <CheckMark />}</Check>
										</PileCheckCell>
									</PileRow>
								))}
							</PileListRows>
							<MiniScroll>
								<Chevron up />
								<MiniThumb />
								<Chevron />
							</MiniScroll>
						</PileList>
						<ButtonRow $mt={6}>
							<PanelButton $w={119}>Select All</PanelButton>
							<PanelButton $w={119}>Deselect All</PanelButton>
						</ButtonRow>
						<ButtonRow $mt={7}>
							<PanelButton>Defaults...</PanelButton>
						</ButtonRow>
						<PropGrid $mt={6}>
							{CHART_GROUPS.map((g) => (
								<Group key={g.title} title={g.title} items={g.items} />
							))}
						</PropGrid>
						<SectionHeader $h={14} $mt={7}>
							<HeadTriangle />
							Series Options
						</SectionHeader>
						<PropGrid $mt={4}>
							{SERIES_GROUPS.map((g) => (
								<Group
									key={g.title}
									title={g.title}
									items={[
										{ name: 'Color', color: g.color },
										{ name: 'Marker', value: 'Circle' },
										{ name: 'Marker Size', value: '7' },
									]}
								/>
							))}
							<WhiteGap />
						</PropGrid>
						<SectionHeader $h={20} $mt={5}>
							<HeadTriangle />
							Vertical Axis Options
						</SectionHeader>
						<PropGrid $mt={5}>
							<Group title="Depth" items={[{ name: 'Auto Scale', check: true, label: 'Yes' }, { name: ' ', value: '' }]} />
						</PropGrid>
					</PanelBody>
					<PanelScroll>
						<ScrollArrow><Chevron up /></ScrollArrow>
						<ScrollThumb />
						<ScrollRest />
						<ScrollArrow><Chevron /></ScrollArrow>
					</PanelScroll>
				</RightPanel>
			</Main>
		</Window>
	);
};

export default App;
